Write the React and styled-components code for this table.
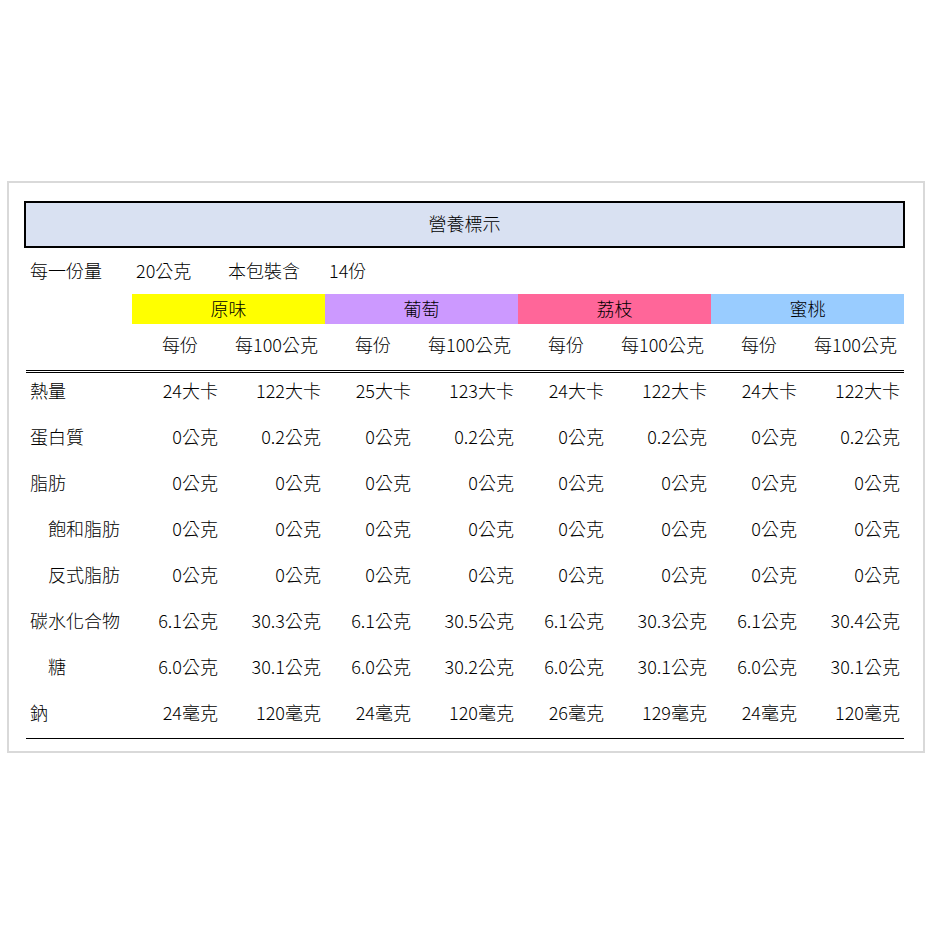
import React from "react";
import styled, { createGlobalStyle } from "styled-components";

const Global = createGlobalStyle`
  html, body { margin: 0; padding: 0; background: #fff; }
  body {
    font-family: "Noto Sans CJK TC", "Noto Sans CJK JP", sans-serif;
    color: #000;
    font-weight: 300;
  }
`;

const Page = styled.div`
  padding: 181px 0 0 7px;
`;

const Frame = styled.div`
  box-sizing: border-box;
  width: 918px;
  border: 2px solid #d9d9d9;
  padding: 18px 18px 12px 15px;
`;

const Title = styled.div`
  box-sizing: border-box;
  height: 47px;
  border: 2px solid #000;
  background: #d9e1f2;
  display: flex;
  align-items: center;
  justify-content: center;
  font-size: 18px;
  padding-bottom: 3px;
`;

const Table = styled.div`
  margin-left: 2px;
  width: 878px;
`;

const cols = "106px repeat(4, 96px 97px)";

const ServingRow = styled.div`
  display: grid;
  grid-template-columns: ${cols};
  height: 46px;
  box-sizing: border-box;
  padding-bottom: 2px;
  align-items: center;
  font-size: 18px;
  line-height: 20px;
`;

const ServingCell = styled.div`
  padding-left: ${(p) => p.$pad ?? 4}px;
  white-space: nowrap;
`;

const FlavorRow = styled.div`
  display: grid;
  grid-template-columns: 106px repeat(4, 193px);
  height: 30px;
  font-size: 18px;
`;

const Flavor = styled.div`
  background: ${(p) => p.$color};
  display: flex;
  align-items: center;
  justify-content: center;
  padding-bottom: 3px;
  grid-column: ${(p) => p.$col};
`;

const SubRow = styled.div`
  display: grid;
  grid-template-columns: ${cols};
  height: 46px;
  box-sizing: content-box;
  border-bottom: 3px double #000;
  align-items: center;
  font-size: 18px;
  line-height: 20px;
`;

const SubCell = styled.div`
  text-align: center;
  white-space: nowrap;
  margin-top: -6px;
  grid-column: ${(p) => p.$col};
`;

const Body = styled.div`
  display: grid;
  row-gap: 10px;
  padding-bottom: 7px;
  border-bottom: 1px solid #000;
`;

const DataRow = styled.div`
  display: grid;
  grid-template-columns: ${cols};
  height: 36px;
  box-sizing: border-box;
  padding-bottom: 3px;
  align-items: center;
  font-size: 18px;
  line-height: 20px;
`;

const Label = styled.div`
  padding-left: ${(p) => (p.$indent ? 22 : 4)}px;
  white-space: nowrap;
`;

const Value = styled.div`
  text-align: right;
  white-space: nowrap;
  padding-right: ${(p) => (p.$per100 ? 4 : 10)}px;
`;

const flavors = [
  { name: "原味", color: "#ffff00" },
  { name: "葡萄", color: "#cc99ff" },
  { name: "荔枝", color: "#ff6699" },
  { name: "蜜桃", color: "#99ccff" },
];

const g = (a) => [a, a, a, a, a, a, a, a];

const rows = [
  { label: "熱量", vals: ["24大卡", "122大卡", "25大卡", "123大卡", "24大卡", "122大卡", "24大卡", "122大卡"] },
  { label: "蛋白質", vals: ["0公克", "0.2公克", "0公克", "0.2公克", "0公克", "0.2公克", "0公克", "0.2公克"] },
  { label: "脂肪", vals: g("0公克") },
  { label: "飽和脂肪", indent: true, vals: g("0公克") },
  { label: "反式脂肪", indent: true, vals: g("0公克") },
  { label: "碳水化合物", vals: ["6.1公克", "30.3公克", "6.1公克", "30.5公克", "6.1公克", "30.3公克", "6.1公克", "30.4公克"] },
  { label: "糖", indent: true, vals: ["6.0公克", "30.1公克", "6.0公克", "30.2公克", "6.0公克", "30.1公克", "6.0公克", "30.1公克"] },
  { label: "鈉", vals: ["24毫克", "120毫克", "24毫克", "120毫克", "26毫克", "129毫克", "24毫克", "120毫克"] },
];

export default function App() {
  return (
    <>
      <Global />
      <Page>
        <Frame>
          <Title>營養標示</Title>
          <Table>
            <ServingRow>
              <ServingCell>每一份量</ServingCell>
              <ServingCell>20公克</ServingCell>
              <ServingCell $pad={-1}>本包裝含</ServingCell>
              <ServingCell>14份</ServingCell>
            </ServingRow>
            <FlavorRow>
              {flavors.map((f, i) => (
                <Flavor key={f.name} $color={f.color} $col={i + 2}>
                  {f.name}
                </Flavor>
              ))}
            </FlavorRow>
            <SubRow>
              {flavors.map((f, i) => (
                <React.Fragment key={f.name}>
                  <SubCell $col={i * 2 + 2}>每份</SubCell>
                  <SubCell $col={i * 2 + 3}>每100公克</SubCell>
                </React.Fragment>
              ))}
            </SubRow>
            <Body>
              {rows.map((r) => (
                <DataRow key={r.label}>
                  <Label $indent={r.indent}>{r.label}</Label>
                  {r.vals.map((v, i) => (
                    <Value key={i} $per100={i % 2 === 1}>
                      {v}
                    </Value>
                  ))}
                </DataRow>
              ))}
            </Body>
          </Table>
        </Frame>
      </Page>
    </>
  );
}
